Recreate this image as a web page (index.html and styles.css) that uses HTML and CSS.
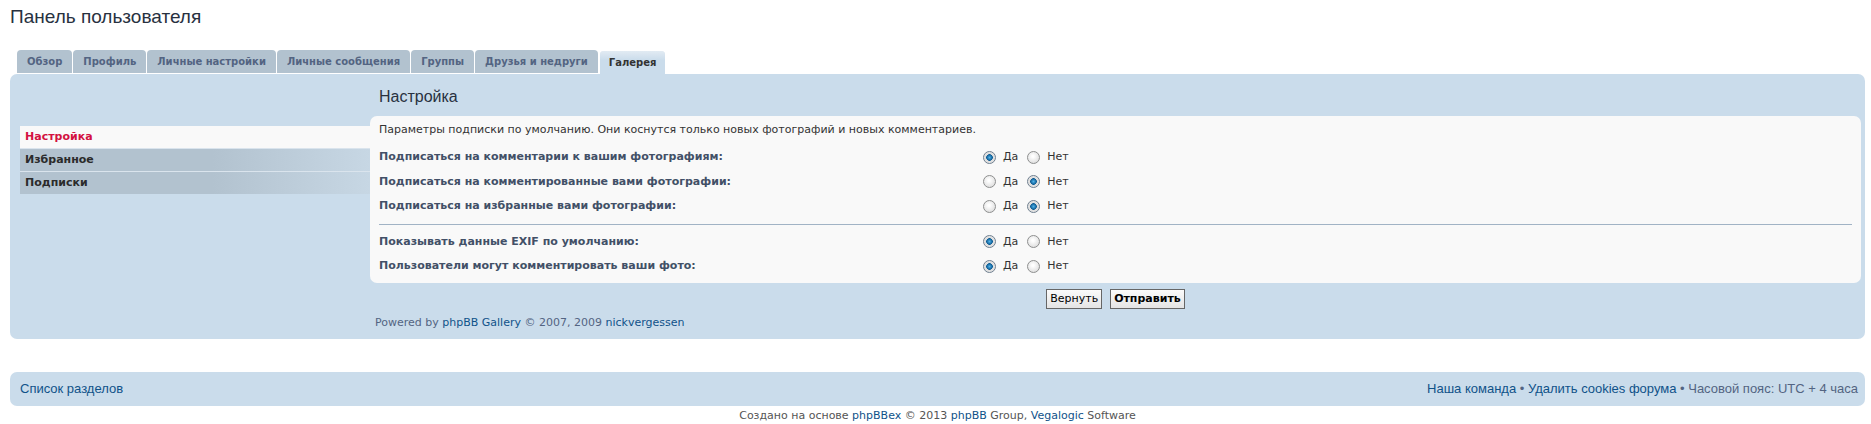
FILE: index.html
```html
<!DOCTYPE html>
<html lang="ru">

<head>
    <meta charset="UTF-8">
    <title>Панель пользователя</title>
    <link rel="stylesheet" href="styles.css">
</head>

<body>
    <div class="wrap">
        <h2 class="page-title">Панель пользователя</h2>

        <ul class="tabs">
            <li><a href="#">Обзор</a></li>
            <li><a href="#">Профиль</a></li>
            <li><a href="#">Личные настройки</a></li>
            <li><a href="#">Личные сообщения</a></li>
            <li><a href="#">Группы</a></li>
            <li><a href="#">Друзья и недруги</a></li>
            <li class="active"><a href="#">Галерея</a></li>
        </ul>

        <div class="panel">
            <div class="cp-body">
                <ul class="cp-menu">
                    <li class="active"><a href="#">Настройка</a></li>
                    <li><a href="#">Избранное</a></li>
                    <li><a href="#">Подписки</a></li>
                </ul>

                <div class="cp-main">
                    <h3 class="cp-title">Настройка</h3>

                    <div class="cp-box">
                        <p class="cp-desc">Параметры подписки по умолчанию. Они коснутся только новых фотографий и новых комментариев.</p>

                        <dl class="opt">
                            <dt>Подписаться на комментарии к вашим фотографиям:</dt>
                            <dd>
                                <label><input type="radio" name="o1" checked>Да</label>
                                <label><input type="radio" name="o1">Нет</label>
                            </dd>
                        </dl>
                        <dl class="opt">
                            <dt>Подписаться на комментированные вами фотографии:</dt>
                            <dd>
                                <label><input type="radio" name="o2">Да</label>
                                <label><input type="radio" name="o2" checked>Нет</label>
                            </dd>
                        </dl>
                        <dl class="opt">
                            <dt>Подписаться на избранные вами фотографии:</dt>
                            <dd>
                                <label><input type="radio" name="o3">Да</label>
                                <label><input type="radio" name="o3" checked>Нет</label>
                            </dd>
                        </dl>

                        <hr class="sep">

                        <dl class="opt">
                            <dt>Показывать данные EXIF по умолчанию:</dt>
                            <dd>
                                <label><input type="radio" name="o4" checked>Да</label>
                                <label><input type="radio" name="o4">Нет</label>
                            </dd>
                        </dl>
                        <dl class="opt">
                            <dt>Пользователи могут комментировать ваши фото:</dt>
                            <dd>
                                <label><input type="radio" name="o5" checked>Да</label>
                                <label><input type="radio" name="o5">Нет</label>
                            </dd>
                        </dl>
                    </div>

                    <div class="submit-row">
                        <button class="btn">Вернуть</button>
                        <button class="btn btn-main">Отправить</button>
                    </div>

                    <p class="powered">Powered by <a href="#">phpBB Gallery</a> &copy; 2007, 2009 <a href="#">nickvergessen</a></p>
                </div>
            </div>
        </div>

        <div class="navbar">
            <a href="#">Список разделов</a>
            <span class="nav-right"><a href="#">Наша команда</a> &bull; <a href="#">Удалить cookies форума</a> &bull; Часовой пояс: UTC + 4 часа</span>
        </div>

        <div class="copyright">
            Создано на основе <a href="#">phpBBex</a> &copy; 2013 <a href="#">phpBB</a> Group, <a href="#">Vegalogic</a> Software
        </div>
    </div>
</body>

</html>
```

FILE: styles.css
```css
body {
    margin: 0;
    padding: 0;
    background-color: #ffffff;
    font-family: "DejaVu Sans", Verdana, sans-serif;
    font-size: 11px;
    color: #333;
}

a {
    color: #105289;
    text-decoration: none;
}

.wrap {
    padding: 0 6px 0 10px;
}

.page-title {
    font-family: "Liberation Sans", Arial, sans-serif;
    font-weight: normal;
    font-size: 19px;
    line-height: 24px;
    color: #28313f;
    margin: 0;
    padding-top: 5px;
    height: 45px;
}

/* tabs */
.tabs {
    list-style: none;
    margin: 0;
    padding: 0 0 0 7px;
    display: flex;
    gap: 1px;
    height: 24px;
}

.tabs li a {
    display: block;
    height: 23px;
    line-height: 23px;
    padding: 0 10px;
    font-size: 10px;
    font-weight: bold;
    color: #536482;
    background-color: #b2c2cf;
    border-radius: 4px 4px 0 0;
    box-sizing: border-box;
}

.tabs li.active a {
    height: 24px;
    color: #333;
    background: linear-gradient(#e2ebf3, #cadceb 40%);
    border: 1px solid #ffffff;
    border-bottom: none;
    padding: 0 9px;
    line-height: 23px;
}

/* main panel */
.panel {
    background-color: #cadceb;
    border-radius: 7px;
    padding: 13px 4px 9px 10px;
}

.cp-body {
    display: flex;
}

.cp-menu {
    list-style: none;
    margin: 39px 0 0 0;
    padding: 0;
    width: 350px;
    flex-shrink: 0;
}

.cp-menu li a {
    display: block;
    height: 22px;
    line-height: 22px;
    padding-left: 5px;
    font-weight: bold;
    color: #2b2b2b;
    background: linear-gradient(to right, #b2c2cf 55%, #c7d7e4 100%);
}

.cp-menu li + li a {
    border-top: 1px solid #dae4ed;
}

.cp-menu li.active a {
    color: #d31141;
    background: #f9f9f9;
}

.cp-main {
    flex: 1;
}

.cp-title {
    font-family: "Liberation Sans", Arial, sans-serif;
    font-weight: normal;
    font-size: 16px;
    line-height: 20px;
    color: #28313f;
    margin: 0 0 9px 9px;
}

.cp-box {
    background-color: #f9f9f9;
    border-radius: 7px;
    padding: 6px 9px 4px 9px;
}

.cp-desc {
    margin: 0 0 8px 0;
    line-height: 15px;
}

.opt {
    display: flex;
    margin: 0;
    padding: 4px 0;
    line-height: 16.5px;
}

.opt dt {
    width: 41%;
    font-weight: bold;
    color: #425067;
}

.opt dd {
    margin: 0;
    display: flex;
    align-items: center;
}

.opt label {
    display: inline-flex;
    align-items: center;
    margin-right: 9px;
    color: #333;
}

.opt input {
    appearance: none;
    -webkit-appearance: none;
    width: 13px;
    height: 13px;
    margin: 0 7px 0 0;
    border: 1px solid #8e8f8f;
    border-radius: 50%;
    background: radial-gradient(circle at 45% 40%, #ffffff 10%, #d4d4d4 100%);
    box-sizing: border-box;
}

.opt input:checked {
    background: radial-gradient(circle at 50% 50%, #4fb3ea 0, #0d5c94 3px, #dcdcdc 3.6px, #f2f2f2 100%);
    border-color: #6f7f8f;
}

.sep {
    border: none;
    border-top: 1px solid #a1b3c5;
    margin: 5px 0;
}

.submit-row {
    display: flex;
    justify-content: center;
    gap: 8px;
    margin-top: 6px;
    height: 20px;
}

.btn {
    font-family: "DejaVu Sans", Verdana, sans-serif;
    font-size: 11px;
    height: 20px;
    padding: 0 3px;
    color: #000;
    background: linear-gradient(#fbfbfb, #e4e4e4);
    border: 1px solid #666;
    border-radius: 0;
}

.btn-main {
    font-weight: bold;
}

.powered {
    margin: 7px 0 0 5px;
    font-size: 11px;
    line-height: 14px;
    color: #536482;
}

/* footer */
.navbar {
    margin-top: 33px;
    background-color: #cadceb;
    border-radius: 7px;
    height: 34px;
    padding: 0 7px 0 10px;
    display: flex;
    justify-content: space-between;
    align-items: center;
    font-family: "Liberation Sans", Arial, sans-serif;
    font-size: 13px;
    color: #536482;
}

.copyright {
    text-align: center;
    font-size: 11px;
    line-height: 18px;
    color: #555;
    padding-top: 1px;
}
```
